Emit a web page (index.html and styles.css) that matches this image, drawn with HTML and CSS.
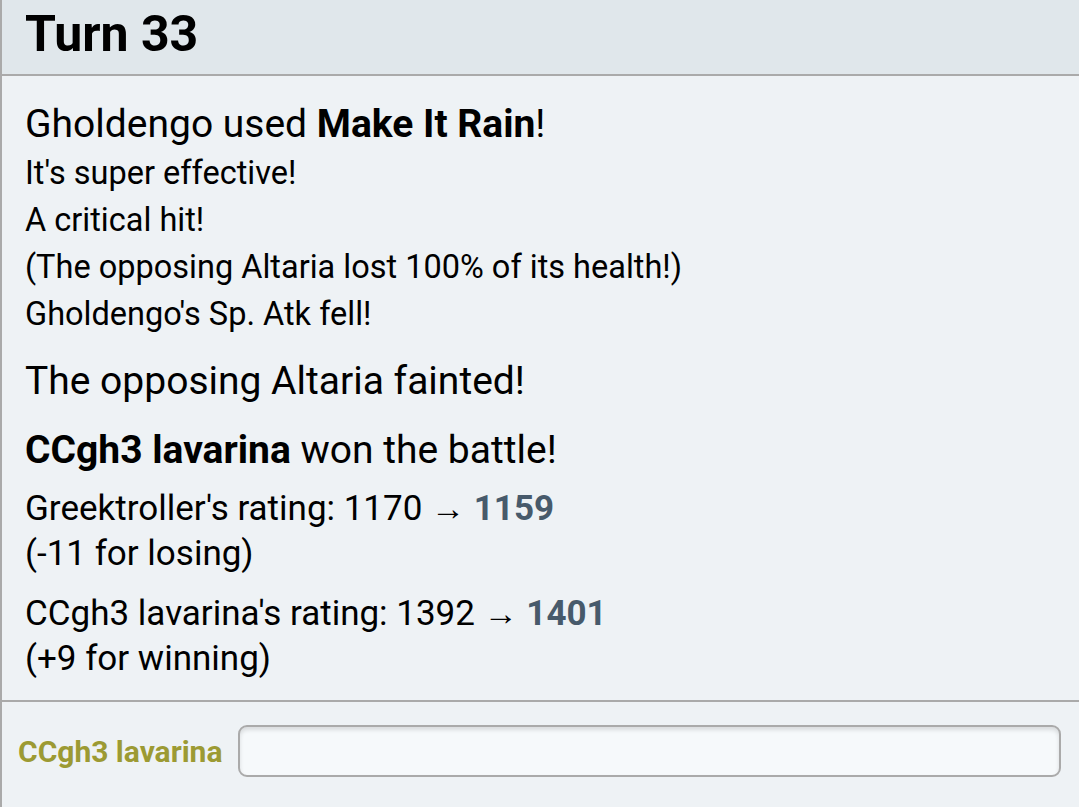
FILE: index.html
```html
<!DOCTYPE html>
<html lang="en">
<head>
    <meta charset="UTF-8">
    <meta name="viewport" content="width=device-width, initial-scale=1.0">
    <title>Battle log</title>
    <link rel="stylesheet" href="styles.css">
</head>
<body>
    <div class="battle-log">
        <h2 class="turn">Turn 33</h2>

        <div class="entries">
            <div class="history">
                <div class="move">Gholdengo used <strong>Make It Rain</strong>!</div>
                <div class="minor first">It's super effective!</div>
                <div class="minor">A critical hit!</div>
                <div class="minor">(The opposing Altaria lost 100% of its health!)</div>
                <div class="minor">Gholdengo's Sp. Atk fell!</div>
            </div>

            <div class="history big faint">The opposing Altaria fainted!</div>

            <div class="history big"><strong>CCgh3 lavarina</strong> won the battle!</div>

            <div class="rating">
                Greektroller's rating: 1170 <span class="arrow">&rarr;</span> <strong>1159</strong><br>
                (-11 for losing)
            </div>

            <div class="rating second">
                CCgh3 lavarina's rating: 1392 <span class="arrow">&rarr;</span> <strong>1401</strong><br>
                (+9 for winning)
            </div>
        </div>

        <div class="chatbox">
            <label class="username" for="message">CCgh3 lavarina</label>
            <input type="text" id="message" class="textbox">
        </div>
    </div>
</body>
</html>
```

FILE: styles.css
```css
html, body {
    margin: 0;
    padding: 0;
    height: 100%;
}
body {
    font-family: Roboto, 'Noto Sans', Arial, sans-serif;
    color: #000;
    background-color: #eef2f5;
}
.battle-log {
    min-height: 100%;
    border-left: 2px solid #aaa;
    background-color: #eef2f5;
    box-sizing: border-box;
}
.turn {
    margin: 0;
    height: 74px;
    padding-left: 23px;
    font-size: 50px;
    font-weight: bold;
    line-height: 68px;
    background-color: #e0e7eb;
    border-bottom: 2px solid #aaa;
    box-sizing: content-box;
}
.entries {
    padding: 25px 0 19px 23px;
    border-bottom: 2px solid #aaa;
}
.move {
    font-size: 39px;
    line-height: 47px;
}
.minor {
    font-size: 32.5px;
    line-height: 47px;
}
.minor.first {
    margin-top: 2px;
}
.big {
    margin-top: 22px;
    font-size: 39px;
    line-height: 47px;
}
.big.faint {
    margin-top: 20px;
}
.rating {
    margin-top: 12px;
    font-size: 35px;
    line-height: 45px;
}
.rating.second {
    margin-top: 15px;
}
.rating strong {
    color: #475a6b;
}
.arrow {
    font-size: 34px;
}
.chatbox {
    display: flex;
    align-items: center;
    gap: 16px;
    padding: 23px 18px 0 16px;
}
.username {
    font-size: 30px;
    font-weight: bold;
    color: #9c9a33;
    white-space: nowrap;
}
.textbox {
    flex: 1;
    height: 52px;
    box-sizing: border-box;
    border: 2px solid #aaa;
    border-radius: 9px;
    background-color: #f6f9fb;
    box-shadow: inset 0 3px 4px rgba(0, 0, 0, 0.12);
    font-family: inherit;
    font-size: 26px;
}
```
